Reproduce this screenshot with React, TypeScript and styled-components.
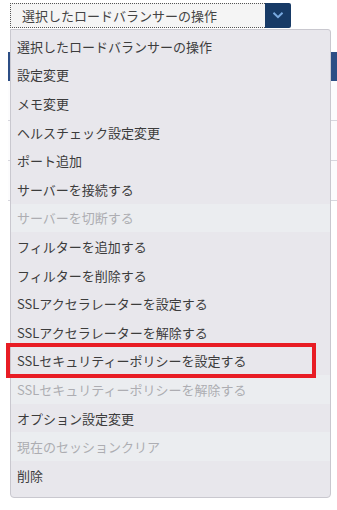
import React from 'react';
import styled, { createGlobalStyle } from 'styled-components';

const ITEMS = [
  { label: '選択したロードバランサーの操作' },
  { label: '設定変更' },
  { label: 'メモ変更' },
  { label: 'ヘルスチェック設定変更' },
  { label: 'ポート追加' },
  { label: 'サーバーを接続する' },
  { label: 'サーバーを切断する', disabled: true },
  { label: 'フィルターを追加する' },
  { label: 'フィルターを削除する' },
  { label: 'SSLアクセラレーターを設定する' },
  { label: 'SSLアクセラレーターを解除する' },
  { label: 'SSLセキュリティーポリシーを設定する', marked: true },
  { label: 'SSLセキュリティーポリシーを解除する', disabled: true },
  { label: 'オプション設定変更' },
  { label: '現在のセッションクリア', disabled: true },
  { label: '削除' },
];

const GlobalStyle = createGlobalStyle`
  html, body {
    margin: 0;
    background: #ffffff;
  }
  body {
    font-family: Meiryo, "Noto Sans CJK JP", "Noto Sans", sans-serif;
  }
`;

export default function App() {
  return (
    <>
      <GlobalStyle />
      <Page>
        <SelectBox>
          <SelectText>選択したロードバランサーの操作</SelectText>
          <SelectButton>
            <svg width="10" height="7" viewBox="0 0 10 7" fill="none">
              <path
                d="M1.2 1.5L5 5.2L8.8 1.5"
                stroke="#79a9df"
                strokeWidth="2"
                strokeLinecap="square"
              />
            </svg>
          </SelectButton>
        </SelectBox>

        <Table>
          <TableHeader />
          <TableRow />
          <TableRow />
          <TableRow />
        </Table>

        <Menu>
          {ITEMS.map((item, index) => (
            <MenuItem key={index} $disabled={!!item.disabled}>
              {item.label}
              {item.marked && <Marker />}
            </MenuItem>
          ))}
        </Menu>
      </Page>
    </>
  );
}

const Page = styled.div`
  position: relative;
  width: 337px;
  height: 510px;
  padding: 3px 0 0 8px;
  box-sizing: border-box;
  overflow: hidden;
`;

const SelectBox = styled.div`
  display: flex;
  margin-left: 2px;
  width: 281px;
  height: 25px;
  box-sizing: border-box;
`;

const SelectText = styled.div`
  flex: 1;
  display: flex;
  align-items: center;
  padding-left: 11px;
  background: #f5f5f5;
  border: 1px dotted #555;
  border-right: none;
  font-size: 13px;
  color: #444;
  white-space: nowrap;
`;

const SelectButton = styled.div`
  width: 26px;
  display: flex;
  align-items: center;
  justify-content: center;
  background: #173a66;
  border-radius: 0 2px 2px 0;
`;

const Table = styled.div`
  margin-top: 24px;
  display: flex;
  flex-direction: column;
`;

const TableHeader = styled.div`
  height: 29px;
  background: #2c4e85;
`;

const TableRow = styled.div`
  height: 39px;
  border-bottom: 1px solid #d7d7de;
  background: #fcfcfd;
`;

const Menu = styled.div`
  position: absolute;
  top: 29px;
  left: 10px;
  width: 321px;
  padding: 2px 0 7px;
  box-sizing: border-box;
  background: #e8e7ec;
  border: 1px solid #c9c8cf;
  border-radius: 0 3px 4px 4px;
  display: flex;
  flex-direction: column;
`;

const MenuItem = styled.div<{ $disabled: boolean }>`
  position: relative;
  height: 28.6px;
  display: flex;
  align-items: center;
  padding-left: 6px;
  font-size: 13px;
  white-space: nowrap;
  color: ${(p) => (p.$disabled ? '#adadb2' : '#3c3c3c')};
  background: ${(p) => (p.$disabled ? '#ebedf0' : 'transparent')};
`;

const Marker = styled.span`
  position: absolute;
  z-index: 1;
  left: -5px;
  top: -4px;
  width: 310px;
  height: 35px;
  border: 4px solid #e81c24;
  box-sizing: border-box;
`;
